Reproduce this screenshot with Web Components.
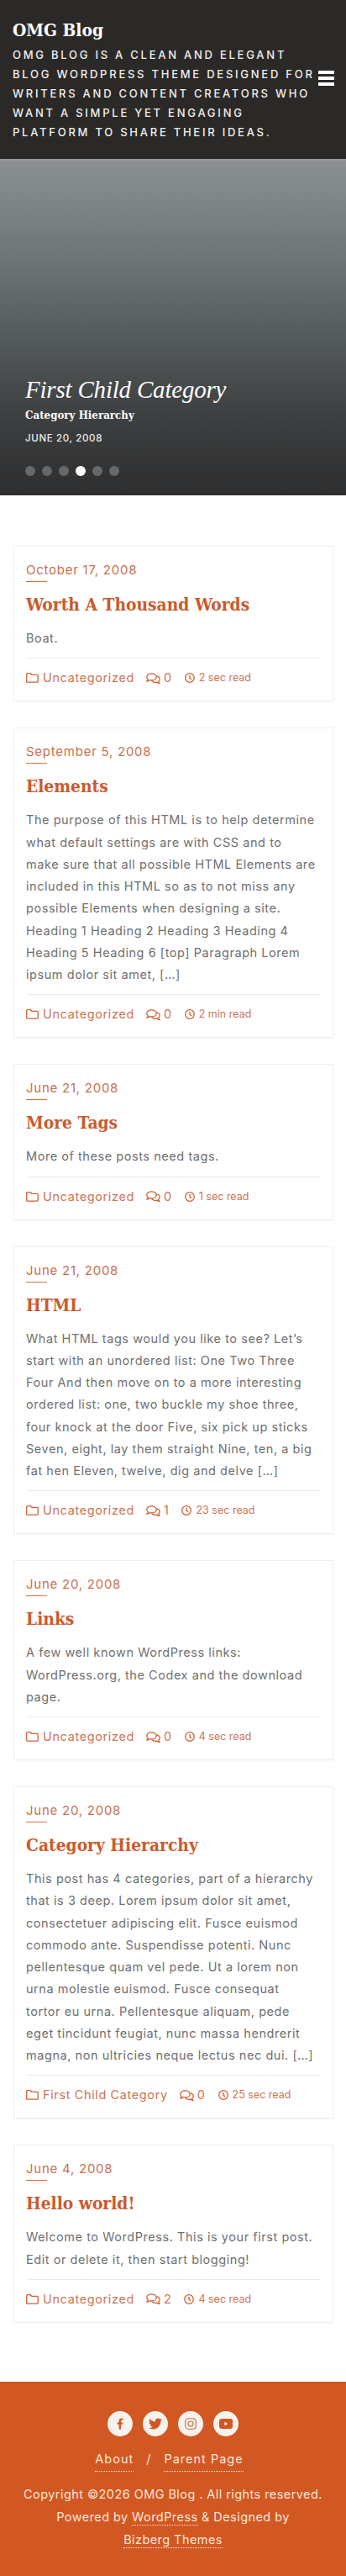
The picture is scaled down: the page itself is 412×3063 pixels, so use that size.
<!DOCTYPE html>
<html lang="en">
<head>
<meta charset="utf-8">
<title>OMG Blog</title>
<style>
    html, body { margin: 0; background: #fff; }
    body { font-family: Inter, 'Liberation Sans', sans-serif; }
</style>
</head>
<body>
<omg-header>
    <span slot="name">OMG Blog</span>
    OMG Blog is a clean and elegant<br>
    blog WordPress theme designed for<br>
    writers and content creators who<br>
    want a simple yet engaging<br>
    platform to share their ideas.
</omg-header>

<omg-slider>
    <span slot="category">First Child Category</span>
    <span slot="title">Category Hierarchy</span>
    <span slot="date">June 20, 2008</span>
</omg-slider>

<post-list>
    <post-card>
        <span slot="date">October 17, 2008</span>
        <span slot="title">Worth A Thousand Words</span>
        Boat.
        <span slot="cat">Uncategorized</span>
        <span slot="comments">0</span>
        <span slot="read">2 sec read</span>
    </post-card>
    <post-card>
        <span slot="date">September 5, 2008</span>
        <span slot="title">Elements</span>
        The purpose of this HTML is to help determine<br>
        what default settings are with CSS and to<br>
        make sure that all possible HTML Elements are<br>
        included in this HTML so as to not miss any<br>
        possible Elements when designing a site.<br>
        Heading 1 Heading 2 Heading 3 Heading 4<br>
        Heading 5 Heading 6 [top] Paragraph Lorem<br>
        ipsum dolor sit amet, […]
        <span slot="cat">Uncategorized</span>
        <span slot="comments">0</span>
        <span slot="read">2 min read</span>
    </post-card>
    <post-card>
        <span slot="date">June 21, 2008</span>
        <span slot="title">More Tags</span>
        More of these posts need tags.
        <span slot="cat">Uncategorized</span>
        <span slot="comments">0</span>
        <span slot="read">1 sec read</span>
    </post-card>
    <post-card>
        <span slot="date">June 21, 2008</span>
        <span slot="title">HTML</span>
        What HTML tags would you like to see? Let’s<br>
        start with an unordered list: One Two Three<br>
        Four And then move on to a more interesting<br>
        ordered list: one, two buckle my shoe three,<br>
        four knock at the door Five, six pick up sticks<br>
        Seven, eight, lay them straight Nine, ten, a big<br>
        fat hen Eleven, twelve, dig and delve […]
        <span slot="cat">Uncategorized</span>
        <span slot="comments">1</span>
        <span slot="read">23 sec read</span>
    </post-card>
    <post-card>
        <span slot="date">June 20, 2008</span>
        <span slot="title">Links</span>
        A few well known WordPress links:<br>
        WordPress.org, the Codex and the download<br>
        page.
        <span slot="cat">Uncategorized</span>
        <span slot="comments">0</span>
        <span slot="read">4 sec read</span>
    </post-card>
    <post-card>
        <span slot="date">June 20, 2008</span>
        <span slot="title">Category Hierarchy</span>
        This post has 4 categories, part of a hierarchy<br>
        that is 3 deep. Lorem ipsum dolor sit amet,<br>
        consectetuer adipiscing elit. Fusce euismod<br>
        commodo ante. Suspendisse potenti. Nunc<br>
        pellentesque quam vel pede. Ut a lorem non<br>
        urna molestie euismod. Fusce consequat<br>
        tortor eu urna. Pellentesque aliquam, pede<br>
        eget tincidunt feugiat, nunc massa hendrerit<br>
        magna, non ultricies neque lectus nec dui. […]
        <span slot="cat">First Child Category</span>
        <span slot="comments">0</span>
        <span slot="read">25 sec read</span>
    </post-card>
    <post-card>
        <span slot="date">June 4, 2008</span>
        <span slot="title">Hello world!</span>
        Welcome to WordPress. This is your first post.<br>
        Edit or delete it, then start blogging!
        <span slot="cat">Uncategorized</span>
        <span slot="comments">2</span>
        <span slot="read">4 sec read</span>
    </post-card>
</post-list>

<omg-footer></omg-footer>

<script>
class OmgHeader extends HTMLElement {
    connectedCallback() {
        this.attachShadow({ mode: 'open' });
        this.shadowRoot.innerHTML = `
            <style>
                :host {
                    display: flex;
                    align-items: flex-start;
                    justify-content: space-between;
                    box-sizing: border-box;
                    height: 191px;
                    padding: 22px 14px 0 15px;
                    background: #2b2927;
                    border-bottom: 2px solid #97999a;
                    color: #f1f0ee;
                }
                .name {
                    font: 700 20.8px/28px 'DejaVu Serif', serif;
                    font-stretch: condensed;
                    color: #fff;
                }
                .tag {
                    margin-top: 4px;
                    font: 500 13px/23.1px Inter, sans-serif;
                    letter-spacing: 2.75px;
                    text-transform: uppercase;
                    white-space: nowrap;
                }
                .burger { display: flex; flex-direction: column; gap: 3px; width: 19px; flex: none; margin-top: 62px; }
                .burger i { display: block; height: 4px; background: #fff; }
            </style>
            <div>
                <div class="name"><slot name="name"></slot></div>
                <div class="tag"><slot></slot></div>
            </div>
            <div class="burger"><i></i><i></i><i></i></div>
        `;
    }
}

class OmgSlider extends HTMLElement {
    connectedCallback() {
        this.attachShadow({ mode: 'open' });
        this.shadowRoot.innerHTML = `
            <style>
                :host {
                    display: flex;
                    flex-direction: column;
                    justify-content: flex-end;
                    box-sizing: border-box;
                    height: 398px;
                    padding: 0 30px 23px;
                    background: linear-gradient(#8b9091 0%, #6b7073 33%, #4f5455 58%, #3a3c3d 80%, #2d2e2f 100%);
                    color: #fff;
                }
                .cat {
                    font: italic 400 29px/38px 'Liberation Serif', serif;
                    letter-spacing: -0.2px;
                }
                .title {
                    font: 700 13.2px/24px 'DejaVu Serif', serif;
                    font-stretch: condensed;
                }
                .date {
                    margin-top: 5px;
                    font: 500 11.5px/20px Inter, sans-serif;
                    letter-spacing: 0.65px;
                    text-transform: uppercase;
                    color: #eee;
                }
                .dots { display: flex; gap: 8px; margin-top: 23px; }
                .dots i { width: 12px; height: 12px; border-radius: 50%; background: #66686a; }
                .dots i.on { background: #fff; }
            </style>
            <div class="cat"><slot name="category"></slot></div>
            <div class="title"><slot name="title"></slot></div>
            <div class="date"><slot name="date"></slot></div>
            <div class="dots"><i></i><i></i><i></i><i class="on"></i><i></i><i></i></div>
        `;
    }
}

class PostList extends HTMLElement {
    connectedCallback() {
        this.attachShadow({ mode: 'open' });
        this.shadowRoot.innerHTML = `
            <style>
                :host {
                    display: flex;
                    flex-direction: column;
                    gap: 31px;
                    padding: 60px 15px 70px 16px;
                }
            </style>
            <slot></slot>
        `;
    }
}

class PostCard extends HTMLElement {
    connectedCallback() {
        this.attachShadow({ mode: 'open' });
        this.shadowRoot.innerHTML = `
            <style>
                :host {
                    display: block;
                    box-sizing: border-box;
                    padding: 15px 15px 14px 14px;
                    border: 1px solid #efefef;
                    box-shadow: 0 1px 2px rgba(0, 0, 0, 0.03);
                    background: #fff;
                    color: #6f6f6f;
                    font: 400 14.5px/26.25px Inter, sans-serif;
                }
                .date {
                    color: #c96f50;
                    font-size: 15px;
                    line-height: 26px;
                    letter-spacing: 0.75px;
                }
                .rule { width: 25px; height: 1px; background: #d0703f; }
                .title {
                    margin: 12px 0;
                    color: #cb5a2c;
                    font: 700 20.8px/30px 'DejaVu Serif', serif;
                    font-stretch: condensed;
                }
                .body { white-space: nowrap; letter-spacing: 0.55px; }
                .meta {
                    display: flex;
                    align-items: center;
                    margin: 10px 0 0 1px;
                    padding-top: 10px;
                    border-top: 1px solid #eaeaea;
                    color: #cd7455;
                    line-height: 26px;
                    letter-spacing: 0.62px;
                    white-space: nowrap;
                }
                svg { flex: none; fill: none; stroke: #cf6233; stroke-width: 1.3; }
                .folder { margin: 0 5px 0 -1px; }
                .talk { margin: 0 4px 0 14px; }
                .clock { margin: 0 5px 0 15px; }
                .read { font-size: 12.5px; letter-spacing: 0; }
            </style>
            <div class="date"><slot name="date"></slot></div>
            <div class="rule"></div>
            <div class="title"><slot name="title"></slot></div>
            <div class="body"><slot></slot></div>
            <div class="meta">
                <svg class="folder" width="15" height="12" viewBox="0 0 15 12"><path d="M1.6 .7h3.6l1.5 1.6h6.6c.5 0 .9.4.9.9v7.1c0 .5-.4.9-.9.9H1.6c-.5 0-.9-.4-.9-.9V1.6c0-.5.4-.9.9-.9z"/></svg>
                <slot name="cat"></slot>
                <svg class="talk" width="17" height="13" viewBox="0 0 17 13"><path d="M6.5 .8c3.2 0 5.7 1.8 5.7 4.1S9.700 9 6.500 9c-.8 0-1.500-.1-2.200-.3C3.400 9.500 2.300 10 1 10c.7-.7 1.100-1.500 1.200-2.400C1.300 6.900.800 5.900.800 4.900.800 2.600 3.300.8 6.500.8z"/><path d="M12.400 3.900c2.100.4 3.800 1.800 3.800 3.500 0 1-.6 2-1.500 2.600.1.900.5 1.700 1.200 2.400-1.300 0-2.400-.5-3.300-1.300-2.300.6-4.800-.1-5.900-1.700"/></svg>
                <slot name="comments"></slot>
                <svg class="clock" width="12" height="12" viewBox="0 0 12 12"><circle cx="6" cy="6" r="5.300"/><path d="M6 2.800V6.300l2.200 1.500"/></svg>
                <span class="read"><slot name="read"></slot></span>
            </div>
        `;
    }
}

class SocialIcon extends HTMLElement {
    connectedCallback() {
        this.attachShadow({ mode: 'open' });
        this.shadowRoot.innerHTML = `
            <style>
                :host {
                    display: flex;
                    align-items: center;
                    justify-content: center;
                    width: 30px;
                    height: 30px;
                    border-radius: 50%;
                    background: #f8f2ed;
                }
            </style>
            <slot></slot>
        `;
    }
}

class OmgFooter extends HTMLElement {
    connectedCallback() {
        this.attachShadow({ mode: 'open' });
        this.shadowRoot.innerHTML = `
            <style>
                :host {
                    display: block;
                    box-sizing: border-box;
                    height: 233px;
                    padding-top: 35px;
                    background: #d25823;
                    color: #fbe6d8;
                    text-align: center;
                    font: 400 14.5px/27px Inter, sans-serif;
                }
                .social { display: flex; justify-content: center; gap: 12px; }
                .links {
                    display: flex;
                    justify-content: center;
                    gap: 15px;
                    margin-top: 13px;
                    padding-right: 9px;
                    letter-spacing: 1px;
                }
                a {
                    color: inherit;
                    text-decoration: none;
                    border-bottom: 1px dotted #fbe6d8;
                    padding-bottom: 1px;
                }
                .copy { margin-top: 13px; letter-spacing: 0.43px; white-space: nowrap; }
            </style>
            <div class="social">
                <social-icon><svg width="8" height="14" viewBox="0 0 320 512" fill="#d25823"><path d="M279.14 288l14.22-92.66h-88.91v-60.13c0-25.35 12.42-50.06 52.24-50.06h40.42V6.26S260.43 0 225.36 0c-73.22 0-121.08 44.38-121.08 124.72v70.62H22.89V288h81.39v224h100.17V288z"/></svg></social-icon>
                <social-icon><svg width="16" height="16" viewBox="0 0 512 512" fill="#d25823"><path d="M459.37 151.716c.325 4.548.325 9.097.325 13.645 0 138.72-105.583 298.558-298.558 298.558-59.452 0-114.68-17.219-161.137-47.106 8.447.974 16.568 1.299 25.34 1.299 49.055 0 94.213-16.568 130.274-44.832-46.132-.975-84.792-31.188-98.112-72.772 6.498.974 12.995 1.624 19.818 1.624 9.421 0 18.843-1.3 27.614-3.573-48.081-9.747-84.143-51.98-84.143-102.985v-1.299c13.969 7.797 30.214 12.67 47.431 13.319-28.264-18.843-46.781-51.005-46.781-87.391 0-19.492 5.197-37.36 14.294-52.954 51.655 63.675 129.3 105.258 216.365 109.807-1.624-7.797-2.599-15.918-2.599-24.04 0-57.828 46.782-104.934 104.934-104.934 30.213 0 57.502 12.67 76.67 33.137 23.715-4.548 46.456-13.32 66.599-25.34-7.798 24.366-24.366 44.833-46.132 57.827 21.117-2.273 41.584-8.122 60.426-16.243-14.292 20.791-32.161 39.308-52.628 54.253z"/></svg></social-icon>
                <social-icon><svg width="14" height="14" viewBox="0 0 14 14" fill="none" stroke="#c9694a" stroke-width="1.100"><rect x=".8" y=".8" width="12.400" height="12.400" rx="3.400"/><circle cx="7" cy="7" r="3"/><circle cx="10.500" cy="3.500" r=".5" fill="#c9694a" stroke="none"/></svg></social-icon>
                <social-icon><svg width="16" height="12" viewBox="0 0 16 12"><rect width="16" height="12" rx="3" fill="#d25823"/><path d="M6.400 3.800 10.200 6 6.400 8.200z" fill="#f8f2ed"/></svg></social-icon>
            </div>
            <div class="links"><a>About</a><span>/</span><a>Parent Page</a></div>
            <div class="copy">
                Copyright ©2026 OMG Blog . All rights reserved.<br>
                Powered by <a>WordPress</a> &amp; Designed by<br>
                <a>Bizberg Themes</a>
            </div>
        `;
    }
}

customElements.define('omg-header', OmgHeader);
customElements.define('omg-slider', OmgSlider);
customElements.define('post-list', PostList);
customElements.define('post-card', PostCard);
customElements.define('social-icon', SocialIcon);
customElements.define('omg-footer', OmgFooter);
</script>
</body>
</html>
